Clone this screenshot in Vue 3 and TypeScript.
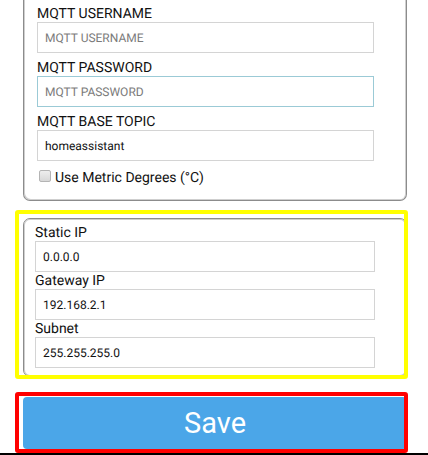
<script setup lang="ts">
import { ref } from 'vue'

interface Field {
  id: string
  label: string
  value: string
  placeholder?: string
  type?: string
  active?: boolean
}

const mqttFields = ref<Field[]>([
  { id: 'mqtt-user', label: 'MQTT USERNAME', value: '', placeholder: 'MQTT USERNAME' },
  { id: 'mqtt-pass', label: 'MQTT PASSWORD', value: '', placeholder: 'MQTT PASSWORD', type: 'password', active: true },
  { id: 'mqtt-topic', label: 'MQTT BASE TOPIC', value: 'homeassistant' },
])

const networkFields = ref<Field[]>([
  { id: 'static-ip', label: 'Static IP', value: '0.0.0.0' },
  { id: 'gateway-ip', label: 'Gateway IP', value: '192.168.2.1' },
  { id: 'subnet', label: 'Subnet', value: '255.255.255.0' },
])

const metric = ref(false)
</script>

<template>
  <form class="page" @submit.prevent>
    <div class="content">
      <section class="card mqtt">
        <div v-for="f in mqttFields" :key="f.id" class="field">
          <label :for="f.id">{{ f.label }}</label>
          <input
            :id="f.id"
            v-model="f.value"
            :type="f.type ?? 'text'"
            :placeholder="f.placeholder"
            :class="{ active: f.active }"
          />
        </div>
        <div class="check">
          <input id="metric" v-model="metric" type="checkbox" />
          <label for="metric">Use Metric Degrees (°C)</label>
        </div>
      </section>

      <div class="marked marked-network">
        <section class="card network">
          <div v-for="f in networkFields" :key="f.id" class="field">
            <label :for="f.id">{{ f.label }}</label>
            <input :id="f.id" v-model="f.value" type="text" />
          </div>
        </section>
      </div>

      <div class="marked marked-save">
        <button type="submit" class="save">Save</button>
      </div>
    </div>
    <div class="bottom-bar"></div>
  </form>
</template>

<style>
body {
  background: #fff;
}
</style>

<style scoped>
.page {
  font-family: Roboto, "Liberation Sans", sans-serif;
  font-size: 14px;
  text-rendering: geometricPrecision;
  color: #111;
}

.content {
  padding: 0 21px 4px 23px;
}

.card {
  border: 1px solid #8c8c8c;
  border-radius: 7px;
  box-shadow: inset 0 0 0 1px #cfcfcf;
}

.mqtt {
  display: flex;
  flex-direction: column;
  gap: 6px;
  border-top: 0;
  border-radius: 0 0 7px 7px;
  box-shadow: inset 1px -1px #cfcfcf, inset -1px 0 #cfcfcf;
  padding: 5px 32px 12px 13px;
}

.network {
  padding: 5px 31px 8px 11px;
}

.field {
  display: flex;
  flex-direction: column;
}

.field label {
  padding-top: 2px;
  line-height: 15px;
}

.field input {
  box-sizing: border-box;
  width: 100%;
  height: 31px;
  margin: 0;
  padding: 0 7px;
  border: 1px solid #d4d4d4;
  border-radius: 0;
  outline: none;
  background: #fff;
  font: inherit;
  font-size: 12px;
  text-rendering: inherit;
  color: #111;
}

.field input::placeholder {
  color: #7b7b7b;
  opacity: 1;
}

.field input.active {
  border-color: #9bcad6;
}

.check {
  display: flex;
  align-items: center;
  gap: 4px;
  height: 21px;
  padding-left: 2px;
}

.check input {
  appearance: none;
  width: 12px;
  height: 12px;
  margin: 0 0 4px;
  border: 1px solid #b4b4b4;
  border-radius: 2px;
  background: linear-gradient(#eee, #d8d8d8);
}

.check input:checked {
  background: #4ba6e8;
}

.marked {
  position: relative;
}

.marked::after {
  content: "";
  position: absolute;
  border: 4px solid;
  border-radius: 3px;
  pointer-events: none;
}

.marked-network {
  margin-top: 17px;
}

.marked-network::after {
  inset: -8px -1px -2px -8px;
  border-color: #ff0;
}

.marked-save {
  margin-top: 20px;
}

.marked-save::after {
  inset: -5px -1px -4px -8px;
  border-color: #f00;
}

.save {
  display: block;
  width: 100%;
  height: 52px;
  padding: 0;
  border: 0;
  border-radius: 4px;
  background: #4ba6e8;
  color: #fff;
  font: inherit;
  font-size: 29px;
  cursor: pointer;
}

.bottom-bar {
  height: 2px;
  background: #000;
}
</style>
